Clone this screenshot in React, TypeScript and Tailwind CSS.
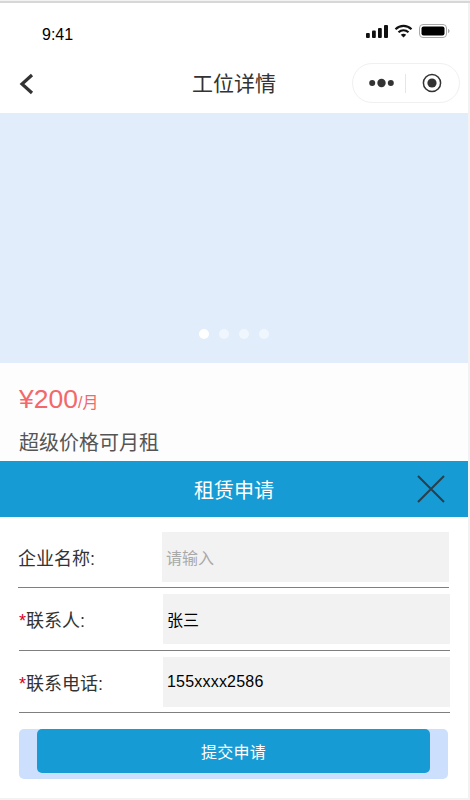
const font = "font-['Liberation_Sans','Noto_Sans_CJK_SC',sans-serif]";

const StatusIcons = () => (
  <div className="flex items-center gap-[6px]">
    <svg width="22" height="13" viewBox="0 0 22 13" fill="#111">
      <rect x="0" y="8" width="3.8" height="5" rx="1" />
      <rect x="6" y="5.5" width="3.8" height="7.5" rx="1" />
      <rect x="12" y="3" width="3.8" height="10" rx="1" />
      <rect x="18" y="0" width="4" height="13" rx="1" />
    </svg>
    <svg width="19" height="14" viewBox="0 0 18 14" fill="none" stroke="#111" strokeWidth="2.2">
      <path d="M1 5.2C5.6 0.8 12.4 0.8 17 5.2" />
      <path d="M4 8.3C6.9 5.7 11.1 5.7 14 8.3" />
      <path d="M9 13.5L6.3 10.8C7.9 9.5 10.1 9.5 11.7 10.8Z" fill="#111" stroke="none" />
    </svg>
    <svg width="31" height="14" viewBox="0 0 31 14" fill="none">
      <rect x="0.5" y="0.5" width="27" height="13" rx="3.5" stroke="#a8a8a8" />
      <rect x="2.5" y="2.5" width="23" height="9" rx="2" fill="#000" />
      <path d="M29 5V9C30 8.7 30.5 8 30.5 7C30.5 6 30 5.3 29 5Z" fill="#a8a8a8" />
    </svg>
  </div>
);

const Capsule = () => (
  <div className="flex items-center w-[108px] h-[40px] rounded-full border border-[#f0f0f0] bg-white">
    <svg width="25" height="10" viewBox="0 0 25 10" fill="#333" className="ml-[16px]">
      <circle cx="3.2" cy="5" r="3" />
      <circle cx="12.5" cy="5" r="4.2" />
      <circle cx="21.8" cy="5" r="3" />
    </svg>
    <div className="ml-[11px] w-px h-[19px] bg-[#e6e6e6]" />
    <svg width="20" height="20" viewBox="0 0 20 20" className="ml-[16px]">
      <circle cx="10" cy="10" r="8.6" fill="none" stroke="#333" strokeWidth="1.5" />
      <circle cx="10" cy="10" r="4.6" fill="#333" />
    </svg>
  </div>
);

type RowProps = {
  label: string;
  required?: boolean;
  value: string;
  placeholder?: boolean;
  className: string;
  inputClass: string;
};

const Row = ({ label, required, value, placeholder, className, inputClass }: RowProps) => (
  <div className={`border-b border-[#7f7f7f] flex items-center ${className}`}>
    <div className="w-[144px] mt-[3px] text-[18px] leading-[24px] text-[#333] whitespace-nowrap">
      {required && <span className="text-[#d9001b]">*</span>}
      {label}
    </div>
    <div
      className={`flex items-center w-[287px] h-[50px] bg-[#f2f2f2] pl-[4px] text-[16px] ${inputClass} ${
        placeholder ? "text-[#a9a9a9]" : "text-black"
      }`}
    >
      {value}
    </div>
  </div>
);

export default function App() {
  return (
    <div className={`${font} w-[470px] h-[800px] overflow-hidden bg-[#f2f2f2]`}>
      <div className="h-[3px] border-b-2 border-[#d7d7d7] bg-[#f2f2f2]" />
      <div className="w-[468px] h-[795px] bg-white flex flex-col">
        <div className="h-[52px] flex items-start justify-between pt-[22px] pl-[42px] pr-[18px]">
          <span className="text-[16px] leading-[20px] text-black">9:41</span>
          <div className="-mt-[1px]">
            <StatusIcons />
          </div>
        </div>

        <div className="h-[58px] flex items-center justify-between pl-[19px] pr-[8px] relative">
          <svg width="15" height="22" viewBox="0 0 15 22" fill="none" stroke="#333" strokeWidth="3.2" className="-mt-[1px]">
            <path d="M13 2L3 11L13 20" />
          </svg>
          <span className="absolute left-0 right-0 text-center text-[21px] text-[#333]">工位详情</span>
          <div className="-mt-[2px]">
            <Capsule />
          </div>
        </div>

        <div className="h-[250px] bg-[#e1edfb] flex items-end justify-center pb-[24px] gap-[10px]">
          <div className="w-[10px] h-[10px] rounded-full bg-white" />
          <div className="w-[10px] h-[10px] rounded-full bg-white/50" />
          <div className="w-[10px] h-[10px] rounded-full bg-white/50" />
          <div className="w-[10px] h-[10px] rounded-full bg-white/50" />
        </div>

        <div className="h-[98px] bg-[#fdfdfd] px-[19px] pt-[20px]">
          <div className="text-[#f2686b] leading-[32px] whitespace-nowrap">
            <span className="text-[26.5px]">¥200</span>
            <span className="text-[16px]">/月</span>
          </div>
          <div className="mt-[10px] text-[20px] leading-[28px] text-[#555]">超级价格可月租</div>
        </div>

        <div className="h-[56px] bg-[#169bd5] flex items-center justify-center pt-[3px] relative">
          <span className="text-[20px] text-white">租赁申请</span>
          <svg width="28" height="28" viewBox="0 0 28 28" stroke="#2c3e4a" strokeWidth="2" className="absolute right-[23px] top-[14px]">
            <path d="M1 1L27 27M27 1L1 27" />
          </svg>
        </div>

        <div className="flex-1 bg-white pt-[15px]">
          <Row
            label="企业名称:"
            value="请输入"
            placeholder
            className="ml-[18px] w-[431px] h-[56px] pb-[5px]"
            inputClass="pt-[4px]"
          />
          <Row
            required
            label="联系人:"
            value="张三"
            className="ml-[19px] w-[431px] h-[57px] mt-[6px] pb-[6px]"
            inputClass="pt-[4px]"
          />
          <Row
            required
            label="联系电话:"
            value="155xxxx2586"
            className="ml-[19px] w-[431px] h-[56px] mt-[6px] pb-[5px]"
            inputClass="tracking-[0.2px]"
          />
          <div className="ml-[19px] mt-[16px] w-[429px] h-[50px] rounded-[5px] bg-[#cce0fd] pl-[18px]">
            <div className="w-[393px] h-[44px] rounded-[5px] bg-[#169bd5] flex items-center justify-center pt-[3px] text-[16px] tracking-[0.3px] text-white">
              提交申请
            </div>
          </div>
        </div>
      </div>
    </div>
  );
}
